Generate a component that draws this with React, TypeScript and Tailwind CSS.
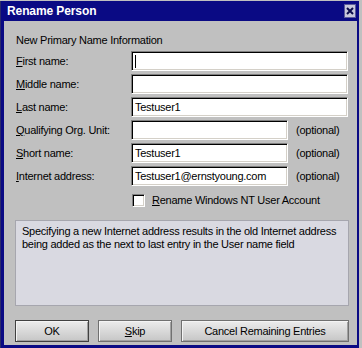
import React from 'react';

const sunken =
  'border border-t-[#808080] border-l-[#808080] border-b-white border-r-white shadow-[inset_1px_1px_0_#000,inset_-1px_-1px_0_#d4d0c8]';

const Field: React.FC<{ label: React.ReactNode; value?: string; optional?: boolean; caret?: boolean }> = ({
  label,
  value,
  optional,
  caret,
}) => (
  <div className="flex items-center h-5">
    <div className="w-[116px] pl-px">{label}</div>
    <div className={`h-5 bg-white flex items-center pl-[3px] ${sunken} ${optional ? 'w-[157px]' : 'w-[217px]'}`}>
      {caret && <span className="w-px h-[13px] bg-black" />}
      {value}
    </div>
    {optional && <span className="ml-[8px]">(optional)</span>}
  </div>
);

const Btn: React.FC<{ w: string; strong?: boolean; children: React.ReactNode }> = ({ w, strong, children }) => (
  <button
    className={`${w} h-[22px] flex items-center justify-center bg-gradient-to-b from-[#ececec] to-[#c6c6c6] border ${
      strong ? 'border-[#404040]' : 'border-[#707070]'
    } shadow-[inset_1px_1px_0_#f4f4f4,inset_-1px_-1px_0_#a0a0a0]`}
  >
    {children}
  </button>
);

export default function App() {
  return (
    <div className="w-[362px] h-[348px] bg-[#c0c0c0] overflow-hidden font-['Liberation_Sans',Arial,sans-serif] text-black">
      <div className="mt-px w-[359px] h-[347px] bg-[#0a0a84] flex flex-col border-l border-[#2a2a6a]">
        {/* Title bar */}
        <div className="h-5 flex items-center pl-[6px] pr-[3px] shrink-0">
          <span className="text-white font-bold text-[12px] leading-none tracking-[-0.1px]">Rename Person</span>
          <div className="ml-auto w-[12px] h-[14px] bg-[#c8c8dc] border border-[#5a5a9a] flex items-center justify-center">
            <svg width="8" height="8" viewBox="0 0 8 8">
              <path d="M1 1L7 7M7 1L1 7" stroke="#0c0c4c" strokeWidth="2" />
            </svg>
          </div>
        </div>

        {/* Body */}
        <div className="flex-1 ml-[3px] mr-[2px] mb-[3px] bg-[#c0c0c0] pl-[11px] pt-[12px] text-[11px] leading-[14px] tracking-[-0.25px]">
          <div className="pl-px">New Primary Name Information</div>

          <div className="mt-[4px] flex flex-col gap-[3px]">
            <Field label={<><u>F</u>irst name:</>} caret />
            <Field label={<><u>M</u>iddle name:</>} />
            <Field label={<><u>L</u>ast name:</>} value="Testuser1" />
            <Field label={<><u>Q</u>ualifying Org. Unit:</>} optional />
            <Field label={<><u>S</u>hort name:</>} value="Testuser1" optional />
            <Field label={<><u>I</u>nternet address:</>} value="Testuser1@ernstyoung.com" optional />
          </div>

          <div className="mt-[7px] ml-[117px] flex items-center gap-[7px]">
            <span className={`w-[13px] h-[13px] bg-white ${sunken}`} />
            <span>
              <u>R</u>ename Windows NT User Account
            </span>
          </div>

          <div className="mt-[13px] w-[334px] h-[86px] bg-[#d9d9e1] border border-[#a6a6ae] pl-[6px] pt-[4px] leading-[13px]">
            Specifying a new Internet address results in the old Internet address being added as the next to last entry
            in the User name field
          </div>

          <div className="mt-[14px] flex gap-[9px]">
            <Btn w="w-[74px]" strong>
              OK
            </Btn>
            <Btn w="w-[74px]">
              <u>S</u>kip
            </Btn>
            <Btn w="w-[168px]">Cancel Remaining Entries</Btn>
          </div>
        </div>
      </div>
    </div>
  );
}
